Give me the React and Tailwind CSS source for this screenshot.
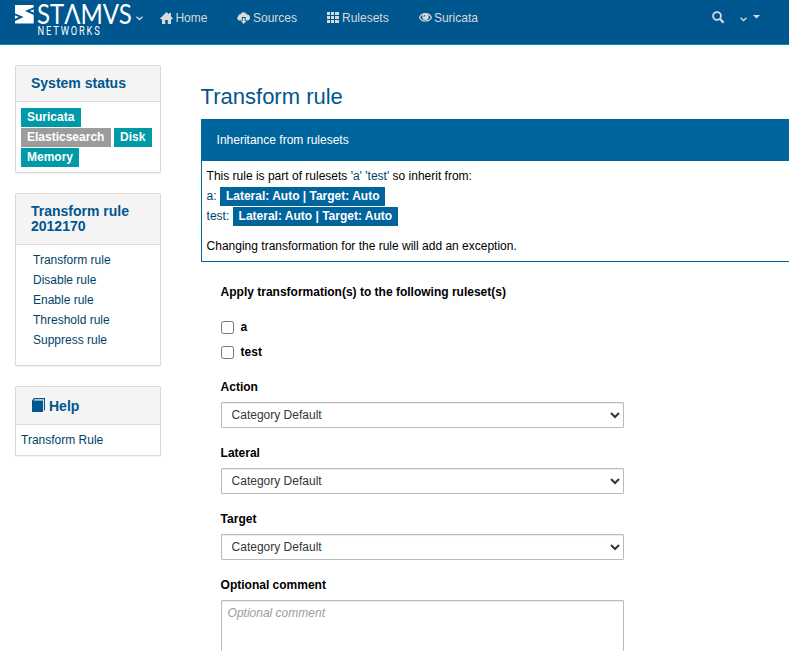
import React from "react";

const HomeIcon = () => (
  <svg width="13" height="12" viewBox="0 0 13 12" fill="currentColor">
    <path d="M6.5 0 L9 2.3 V1 H11 V4.3 L13 6.5 L12.3 7.2 H11 V12 H7.8 V8 H5.2 V12 H2 V7.2 H0.7 L0 6.5 Z" />
  </svg>
);

const CloudIcon = () => (
  <svg width="13" height="12" viewBox="0 0 13 12" fill="currentColor">
    <path d="M2.8 8.4 A2.3 2.3 0 0 1 1.3 4.2 A2 2 0 0 1 3.4 2.3 A3.4 3.4 0 0 1 9.8 2.6 A2.9 2.9 0 0 1 10.2 8.4 H8.6 V5 H4.8 V8.4 Z" />
    <path d="M5.7 6 H7.7 V9 H9.4 L6.7 12 L4 9 H5.7 Z" />
  </svg>
);

const GridIcon = () => (
  <svg width="12" height="12" viewBox="0 0 12 12" fill="currentColor" shapeRendering="crispEdges">
    <path d="M0 0h3v3H0zM4 0h3v3H4zM8 0h4v3H8zM0 4h3v3H0zM4 4h3v3H4zM8 4h4v3H8zM0 8h3v3H0zM4 8h3v3H4zM8 8h4v3H8z" />
  </svg>
);

const EyeIcon = () => (
  <svg width="13" height="12" viewBox="0 0 13 12">
    <path d="M0.6 5.4 C2.8 0.4 10.2 0.4 12.4 5.4 C10.2 10.2 2.8 10.2 0.6 5.4 Z" fill="none" stroke="currentColor" strokeWidth="1.2" />
    <circle cx="6.5" cy="4.8" r="3.2" fill="currentColor" />
    <path d="M4.9 5 A1.7 1.7 0 0 1 6.3 3.2" fill="none" stroke="#00568f" strokeWidth="0.9" />
  </svg>
);

const SearchIcon = () => (
  <svg width="13" height="13" viewBox="0 0 13 13" fill="none" stroke="currentColor">
    <circle cx="5" cy="5" r="3.9" strokeWidth="1.8" />
    <path d="M8 8 L11.6 11.6" strokeWidth="2.3" />
  </svg>
);

const Chevron = ({ className }) => (
  <svg className={className} width="7" height="5" viewBox="0 0 7 5" fill="none" stroke="currentColor" strokeWidth="1.3">
    <path d="M0.5 0.8 L3.5 3.6 L6.5 0.8" />
  </svg>
);

const BookIcon = () => (
  <svg width="14" height="14" viewBox="0 0 14 14" className="mr-1 inline-block align-[-1px]">
    <path d="M1 2.6 L3 0 H14 V12 L12.9 13 V1.2 H3.6 L2.6 2.4 H12 V14 H1 Z" fill="#00568f" />
  </svg>
);

const Logo = () => (
  <svg width="119" height="40" viewBox="14 0 119 40" className="block shrink-0 overflow-visible" fill="#fff">
    <path d="M15 5 H33.7 V23.5 H15 Z" />
    <path d="M14.5 13.2 L23.6 17 L14.5 21.2 V18.9 L18.8 17 L14.5 15.2 Z" fill="#00568f" />
    <path d="M34 7.2 L25 11 L34 15 V12.8 L29.8 11 L34 9.3 Z" fill="#00568f" />
    <text x="37" y="24.3" fontFamily="Lato, sans-serif" fontSize="27" textLength="94.8" lengthAdjust="spacingAndGlyphs">STΛMVS</text>
    <text transform="translate(37.6 35) scale(0.74 1)" fontFamily="Roboto, sans-serif" fontWeight="400" fontSize="12.6" textLength="84" lengthAdjust="spacing">NETWORKS</text>
  </svg>
);

const NavItem = ({ icon, children, className }) => (
  <a className={`flex h-9 items-center ${className}`}>
    {icon}
    <span>{children}</span>
  </a>
);

const Panel = ({ title, className = "", headClass = "py-[10px]", bodyClass, children }) => (
  <section className={`rounded-[1px] border border-[#dadada] shadow-[0_1px_1px_rgba(0,0,0,0.05)] ${className}`}>
    <h2 className={`border-b border-[#dadada] bg-[#f4f4f4] px-[15px] text-sm leading-[15px] font-bold text-[#00568f] ${headClass}`}>
      {title}
    </h2>
    <div className={bodyClass}>{children}</div>
  </section>
);

const Badge = ({ className, children }) => (
  <span className={`block h-[19px] px-[6px] leading-[19px] font-bold text-white ${className}`}>{children}</span>
);

const SelectField = ({ label }) => (
  <div className="mb-[15px] flex flex-col">
    <label className="mb-[5px] font-bold">{label}</label>
    <select className="h-[26px] w-[403px] rounded-[1px] border border-[#bbb] bg-white px-1.5 py-0.5 text-xs leading-5 text-[#363636] shadow-[inset_0_1px_1px_rgba(3,3,3,0.075)]">
      <option>Category Default</option>
    </select>
  </div>
);

const ruleLinks = ["Transform rule", "Disable rule", "Enable rule", "Threshold rule", "Suppress rule"];

export default function App() {
  return (
    <div className="h-[651px] w-[789px] overflow-hidden bg-white font-['Liberation_Sans',Arial,sans-serif] text-xs leading-5 text-black">
      <nav className="flex h-[45px] items-start border-b border-[#0099a8] bg-[#00568f] pl-[14px] text-[#dbdada]">
        <Logo />
        <Chevron className="mt-4 ml-[3px]" />
        <NavItem icon={<HomeIcon />} className="ml-[17px] w-[77px] gap-[2.4px]">Home</NavItem>
        <NavItem icon={<CloudIcon />} className="w-[90px] gap-[3px]">Sources</NavItem>
        <NavItem icon={<GridIcon />} className="w-[91.5px] gap-[3px]">Rulesets</NavItem>
        <NavItem icon={<EyeIcon />} className="gap-[2.4px]">Suricata</NavItem>
        <div className="ml-auto flex pr-[29px]">
          <span className="mt-[11px]"><SearchIcon /></span>
          <Chevron className="mt-[17px] ml-[15px]" />
          <svg className="mt-[15px] ml-1.5" width="7" height="4" viewBox="0 0 7 4" fill="currentColor">
            <path d="M0 0 H7 L3.5 3.5 Z" />
          </svg>
        </div>
      </nav>

      <div className="flex pl-[15px]">
        <aside className="mt-5 w-[146px] shrink-0">
          <Panel title="System status" bodyClass="px-[5px] pt-1.5" className="h-[108px]">
            <div className="flex h-5"><Badge className="bg-[#0099a8] pr-[6.5px]">Suricata</Badge></div>
            <div className="flex h-5 gap-[3.3px]">
              <Badge className="bg-[#9c9c9c] pr-[6.3px]">Elasticsearch</Badge>
              <Badge className="bg-[#0099a8] pr-[6.3px]">Disk</Badge>
            </div>
            <div className="flex h-5"><Badge className="bg-[#0099a8]">Memory</Badge></div>
          </Panel>
          <Panel title="Transform rule 2012170" bodyClass="px-[17px] pt-[5px]" className="mt-5 h-[173px]">
            <ul>
              {ruleLinks.map((t) => <li key={t} className="text-[#004368]">{t}</li>)}
            </ul>
          </Panel>
          <Panel title={<><BookIcon />Help</>} headClass="pt-[11px] pb-[10px]" bodyClass="px-[5px] pt-[5px]" className="mt-5 h-[70px]">
            <a className="text-[#004368]">Transform Rule</a>
          </Panel>
        </aside>

        <main className="ml-[39.6px] min-w-0 flex-1">
          <h1 className="mt-10 text-[22px] leading-6 text-[#00568f]">Transform rule</h1>
          <section className="mt-2.5 h-[143px] rounded-l-[1px] border border-r-0 border-[#00659c]">
            <div className="h-[41px] bg-[#00659c] px-[15px] py-2.5 text-white">Inheritance from rulesets</div>
            <div className="px-[5px] pt-[5px]">
              <p>This rule is part of rulesets <a className="text-[#004368]">'a'</a> <a className="text-[#004368]">'test'</a> so inherit from:</p>
              <div className="flex h-5 gap-[3.3px]"><a className="text-[#004368]">a:</a><Badge className="mt-px bg-[#00659c]">Lateral: Auto | Target: Auto</Badge></div>
              <div className="flex h-5 gap-[3.3px]"><a className="text-[#004368]">test:</a><Badge className="mt-px bg-[#00659c]">Lateral: Auto | Target: Auto</Badge></div>
              <p className="mt-2.5">Changing transformation for the rule will add an exception.</p>
            </div>
          </section>

          <form className="pt-5 pl-5">
            <p className="font-bold">Apply transformation(s) to the following ruleset(s)</p>
            <div className="mt-[15px] mb-[15px] flex flex-col gap-[5px] font-bold">
              <label className="flex items-center gap-[7px]"><input type="checkbox" className="mt-px size-[13px]" />a</label>
              <label className="flex items-center gap-[7px]"><input type="checkbox" className="mt-px size-[13px]" />test</label>
            </div>
            <SelectField label="Action" />
            <SelectField label="Lateral" />
            <SelectField label="Target" />
            <div className="flex flex-col">
              <label className="mb-[5px] font-bold">Optional comment</label>
              <textarea
                placeholder="Optional comment"
                className="h-24 w-[403px] resize-none rounded-[1px] border border-[#bbb] px-1.5 py-0.5 shadow-[inset_0_1px_1px_rgba(3,3,3,0.075)] placeholder:text-[#9c9c9c] placeholder:italic"
              />
            </div>
          </form>
        </main>
      </div>
    </div>
  );
}
